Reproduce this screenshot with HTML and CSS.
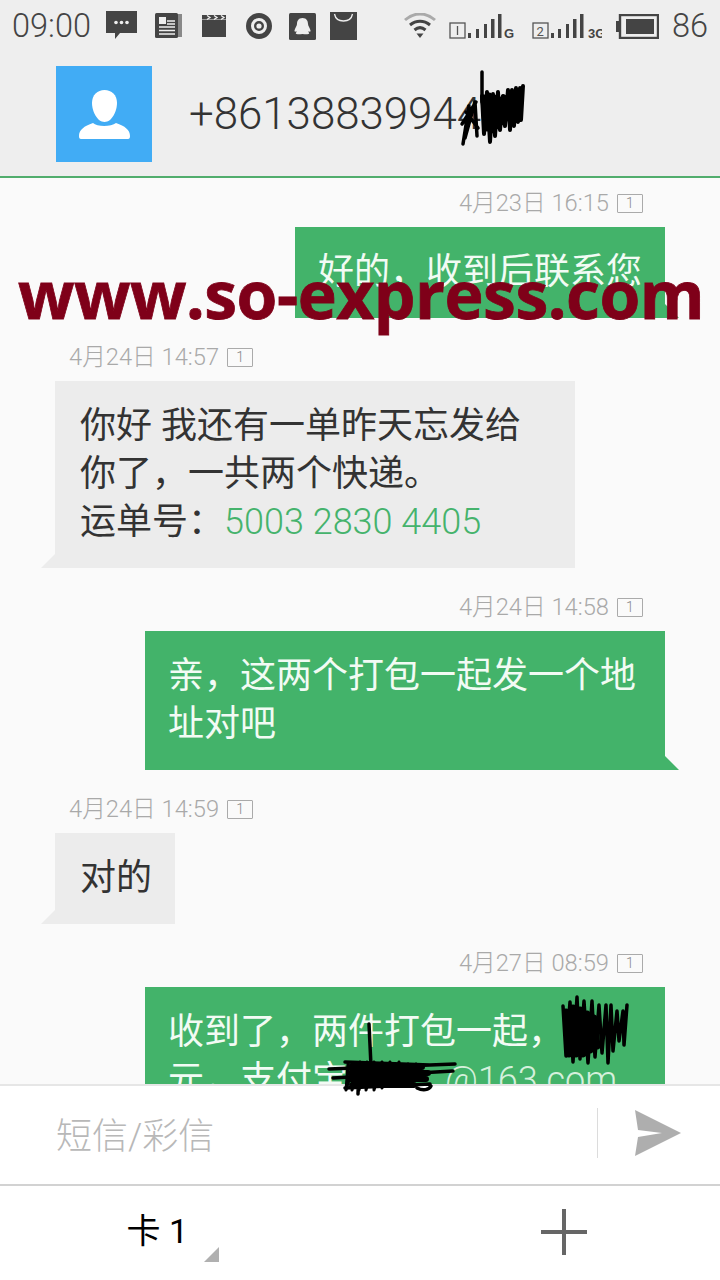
FILE: index.html
```html
<!DOCTYPE html>
<html lang="zh">
<head>
<meta charset="utf-8">
<title>短信</title>
<link rel="stylesheet" href="styles.css">
</head>
<body>
<div class="phone">
  <header class="top">
    <div class="status">
      <span class="clock">09:00</span>
      <div class="notifs">
        <svg class="n1" width="32" height="30" viewBox="0 0 32 30"><path d="M0 0h31v22H14l-5 6v-6H0z" fill="#444"/><circle cx="10" cy="11.500" r="1.800" fill="#eee"/><circle cx="15.500" cy="11.500" r="1.800" fill="#eee"/><circle cx="21" cy="11.500" r="1.800" fill="#eee"/></svg>
        <svg class="n2" width="27" height="25" viewBox="0 0 27 25"><path d="M22 1h5v23H4z" fill="#888"/><rect x="0" y="0" width="23" height="25" rx="1.500" fill="#444"/><rect x="4" y="4" width="7" height="7" fill="#eee"/><path d="M12 8h8M12 11h8M4 14h16M4 17.500h16M4 21h16" stroke="#eee" stroke-width="1.500"/></svg>
        <svg class="n3" width="24" height="22" viewBox="0 0 24 22"><rect x="0" y="5" width="24" height="17" fill="#444"/><path d="M0 0h24v4.500H0z" fill="#444"/><path d="M5 .500l3 2-3 2M12 .500l3 2-3 2M19 .500l3 2-3 2" stroke="#eee" stroke-width="1.300" fill="none"/></svg>
        <svg class="n4" width="26" height="26" viewBox="0 0 26 26"><circle cx="13" cy="13" r="10.500" fill="none" stroke="#444" stroke-width="5"/><circle cx="13" cy="13" r="3.800" fill="none" stroke="#444" stroke-width="2.400"/></svg>
        <svg class="n5" width="27" height="27" viewBox="0 0 27 27"><rect width="27" height="27" rx="1.500" fill="#444"/><path d="M13.500 5c4 0 5.500 3 5.500 6 0 2 2 4 2.500 6.500.3 1.500-1 1.500-2 .5 0 1.500.7 2 .7 2.500 0 .8-3 1-6.700.5-3.700.5-6.700.3-6.700-.5 0-.5.7-1 .7-2.500-1 1-2.300 1-2-.5.5-2.500 2.500-4.500 2.500-6.500 0-3 1.500-6 5.500-6z" fill="#eee"/></svg>
        <svg class="n6" width="27" height="28" viewBox="0 0 27 28"><path d="M0 0h27v28H0z" fill="#444"/><path d="M4.500 2c1 5 5 7 9 7s8-2 9-7" fill="none" stroke="#eee" stroke-width="1.300"/></svg>
      </div>
      <div class="sys">
        <svg width="32" height="26" viewBox="0 0 32 26"><path d="M1 7C10-1 22-1 31 7" fill="none" stroke="#aaa" stroke-width="3"/><path d="M6 12c6-5 14-5 20 0" fill="none" stroke="#444" stroke-width="3"/><path d="M10.500 17c3.500-3 7.500-3 11 0" fill="none" stroke="#444" stroke-width="3"/><path d="M12.500 20.500h7L16 25z" fill="#444"/></svg>
        <svg class="sig1" width="66" height="26" viewBox="0 0 66 26"><rect x="1" y="10" width="15" height="15" fill="none" stroke="#555" stroke-width="1.300"/><path d="M8.500 13v9" stroke="#555" stroke-width="1.300"/><path d="M19 20h3v5h-3zM27 16h3v9h-3zM35 11h3v14h-3zM42 6h3.500v19H42zM49 1h3.500v24H49z" fill="#444"/><text x="55" y="25" class="net">G</text></svg>
        <svg class="sig2" width="70" height="26" viewBox="0 0 70 26"><rect x="1" y="10" width="15" height="15" fill="none" stroke="#555" stroke-width="1.300"/><text x="4.500" y="22.500" class="num">2</text><path d="M19 20h3v5h-3zM26 16h3v9h-3zM34 11h3v14h-3zM41 6h3.500v19H41zM48 1h3.500v24H48z" fill="#444"/><text x="56" y="25" class="net">3G</text></svg>
        <svg class="bat" width="43" height="25" viewBox="0 0 43 25"><path d="M0 7h3v11H0z" fill="#444"/><rect x="4" y="1" width="38" height="23" fill="none" stroke="#444" stroke-width="2.400"/><rect x="10" y="5" width="28" height="15" fill="#444"/></svg>
        <span class="pct">86</span>
      </div>
    </div>
    <div class="contact">
      <div class="avatar">
        <svg width="51" height="49" viewBox="0 0 51 49"><path d="M25.500 0c7 0 12.500 5 12.500 13 0 8-5 19-12.500 19S13 21 13 13C13 5 18.500 0 25.500 0z" fill="#fff"/><path d="M2 49c-1.500 0-2-1-2-3 0-6 5-10 14-13 4 4 18 4 23 0 9 3 14 7 14 13 0 2-.5 3-2 3z" fill="#fff"/></svg>
      </div>
      <span class="number">+86138839944</span>
    </div>
  </header>
  <main class="list">
    <div class="ts ts-out">4月23日 16:15 <i class="sim">1</i></div>
    <div class="bubble out w-auto">好的，收到后联系您</div>
    <div class="ts ts-in">4月24日 14:57 <i class="sim">1</i></div>
    <div class="bubble in w-full">你好 我还有一单昨天忘发给你了，一共两个快递。<br>运单号：<span class="link">5003 2830 4405</span></div>
    <div class="ts ts-out">4月24日 14:58 <i class="sim">1</i></div>
    <div class="bubble out w-full">亲，这两个打包一起发一个地址对吧</div>
    <div class="ts ts-in">4月24日 14:59 <i class="sim">1</i></div>
    <div class="bubble in w-auto">对的</div>
    <div class="ts ts-out">4月27日 08:59 <i class="sim">1</i></div>
    <div class="bubble out w-full">收到了，两件打包一起，<br>元，支付宝<span class="pad"></span><span class="mail">@163.com</span></div>
  </main>
  <section class="compose">
    <span class="placeholder">短信/彩信</span>
    <div class="send">
      <svg width="48" height="48" viewBox="0 0 48 48"><path d="M2 1l46 23L2 47l3-19 24-4-24-3z" fill="#aeaeae"/></svg>
    </div>
  </section>
  <footer class="tools">
    <div class="card"><span>卡 1</span><i class="corner"></i></div>
    <div class="plus"><i class="h"></i><i class="v"></i></div>
  </footer>
  <div class="mark">www.so-express.com</div>
  <svg class="scribble" width="720" height="1280" viewBox="0 0 720 1280">
    <g fill="none" stroke="#000" stroke-width="3.500" stroke-linecap="round" stroke-linejoin="round">
      <path d="M482 72v30M463 144l6-38-4 32 10-36 2 34M466 112l12 16M462 124l14-22"/>
      <path d="M482 96l2 38 3-42 3 50 3-48 2 42 3-44 2 38 3-34 2 30 3-36 2 40 2-40 2 36 2-38 2 34 2-34 1 32 2-34" stroke-width="4"/>
      <path d="M484 98l2 30 3-32 2 34 3-32 2 28 3-26 2 22 3-24 2 20 3-20 2 18 2-18" stroke-width="7"/>
      <path d="M563 1006l3 50 4-54 3 60 4-65 3 62 4-58 4 62 4-62 3 56 4-52 3 48 4-48 2 58 3-58 2 46 4-40 2 30 4-30 1 34 3-40" stroke-width="3.500"/>
      <path d="M566 1012l3 42 4-46 3 46 4-44 3 44 4-40 3 36 4-32 3 28" stroke-width="7"/>
      <path d="M329 1069l126-5M333 1078l120-7M345 1062l85 3M345 1088l85-4M358 1094l1-30M431 1086c-2 4-8 5-14 2"/>
      <path d="M348 1064l-2 26 8-26-2 26 8-28-1 28 8-28-1 28 8-28v28l8-28v26l8-26 1 24 8-24 1 24 8-22 1 18 7-18" stroke-width="3"/>
      <path d="M350 1067h72M350 1073h78M350 1079h76M352 1085h62" stroke-width="6"/>
      <path d="M369 1024l2 42"/>
    </g>
  </svg>
</div>
</body>
</html>
```
FILE: styles.css
```css
* { box-sizing: border-box; margin: 0; padding: 0; }
html, body { width: 720px; height: 1280px; overflow: hidden; background: #fff; }
body { font-family: Roboto, "Noto Sans CJK SC", sans-serif; }
.phone { position: relative; width: 720px; height: 1280px; display: flex; flex-direction: column; overflow: hidden; }
i { font-style: normal; }

.top { height: 178px; flex: none; background: #eeeeee; border-bottom: 2px solid #51ad6d; display: flex; flex-direction: column; }
.status { height: 52px; display: flex; align-items: center; padding: 0 12px; color: #444; }
.clock { font-size: 32.500px; font-weight: 300; width: 94px; flex: none; }
.notifs { display: flex; align-items: center; }
.notifs svg { flex: none; display: block; }
.n2 { margin-left: 17px; margin-top: -1px; }
.n3 { margin-left: 20px; }
.n4 { margin-left: 20px; }
.n5 { margin-left: 17px; }
.n6 { margin-left: 14px; }
.sys { margin-left: auto; display: flex; align-items: center; }
.sys svg { flex: none; display: block; }
.sig1 { margin-left: 13px; }
.sig2 { margin-left: 17px; }
.bat { margin-left: 14px; }
.pct { font-size: 32.500px; font-weight: 300; margin-left: 13px; width: 36px; }
.net { font: 700 13px "Liberation Sans", sans-serif; fill: #444; }
.num { font: 400 13px Roboto, sans-serif; fill: #555; }
.contact { display: flex; align-items: center; padding: 14px 0 0 56px; }
.avatar { width: 96px; height: 96px; background: #41acf5; display: flex; align-items: center; justify-content: center; }
.number { margin-left: 37px; font-size: 43.800px; font-weight: 300; color: #333; white-space: nowrap; }

.list { flex: 1; min-height: 0; background: #fafafa; overflow: hidden; padding: 13px 55px 0; display: flex; flex-direction: column; }
.ts { height: 24px; margin: 27px 0 12px; font-size: 23.700px; line-height: 24px; font-weight: 300; color: #a9a9a9; display: flex; align-items: center; gap: 8px; white-space: nowrap; flex: none; }
.ts:first-child { margin-top: 0; }
.ts-out { align-self: flex-end; margin-right: 22px; }
.ts-in { align-self: flex-start; margin-left: 14px; }
.sim { width: 26px; height: 19px; border: 1.500px solid #aaa; border-radius: 1px; font-size: 14px; line-height: 16px; text-align: center; color: #888; flex: none; }

.bubble { position: relative; font-size: 36px; line-height: 48px; padding: 21px 23px 22px 25px; flex: none; }
.bubble.w-full { width: 520px; }
.bubble.w-auto { width: fit-content; }
.bubble.out { align-self: flex-end; background: #43b36a; color: #f2fbf4; padding-left: 23px; }
.bubble.in { align-self: flex-start; background: #ececec; color: #333; }
.bubble::after { content: ""; position: absolute; bottom: 0; width: 0; height: 0; border-style: solid; }
.bubble.out::after { left: 100%; border-width: 14px 0 0 14px; border-color: transparent transparent transparent #43b36a; }
.bubble.in::after { right: 100%; border-width: 14px 14px 0 0; border-color: transparent #ececec transparent transparent; }
.link { color: #45b36c; font-weight: 300; }
.pad { display: inline-block; width: 97px; }
.mail { color: #d5f0dc; font-weight: 300; }

.compose { height: 102px; flex: none; background: #fff; border-top: 2px solid #e6e6e6; border-bottom: 2px solid #d2d2d2; display: flex; align-items: center; padding: 0 0 4px 56px; }
.placeholder { font-size: 36px; color: #b8b8b8; font-weight: 300; }
.send { margin-left: auto; width: 123px; height: 50px; border-left: 1px solid #dcdcdc; display: flex; align-items: center; padding-left: 35px; }

.tools { height: 94px; flex: none; background: #fff; display: flex; align-items: center; padding-bottom: 3px; }
.card { width: 220px; height: 94px; position: relative; display: flex; align-items: center; justify-content: flex-end; padding: 0 32px 7px 0; font-size: 34px; color: #000; }
.corner { position: absolute; left: 204px; top: 62px; width: 0; height: 0; border-style: solid; border-width: 0 0 15px 15px; border-color: transparent transparent #b0b0b0 transparent; }
.plus { position: relative; width: 46px; height: 46px; margin-left: 321px; }
.plus .h { position: absolute; left: 0; top: 21px; width: 46px; height: 4px; background: #666; }
.plus .v { position: absolute; left: 21px; top: 0; width: 4px; height: 46px; background: #666; }

.mark { position: absolute; left: 18px; top: 251px; font: 700 66px/84px "Open Sans", sans-serif; color: #7f0019; letter-spacing: -.5px; -webkit-text-stroke: .8px #7f0019; white-space: nowrap; }
.scribble { position: absolute; left: 0; top: 0; }
```
